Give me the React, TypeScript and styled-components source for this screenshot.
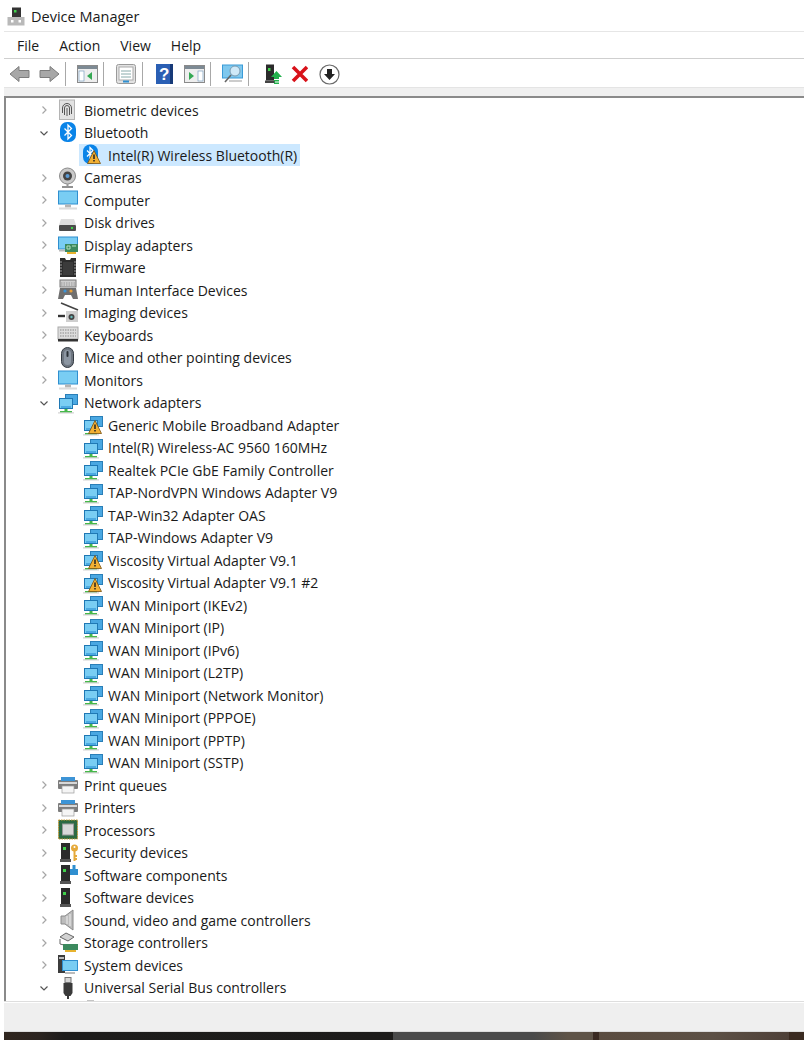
import React from "react";
import styled, { createGlobalStyle } from "styled-components";

const Global = createGlobalStyle`
  * { box-sizing: border-box; }
  html, body { margin: 0; padding: 0; background: #fff; }
  body { font-family: "Open Sans", "Liberation Sans", sans-serif; color: #1a1a1a; }
`;

const Page = styled.div`
  width: 804px;
  height: 1040px;
  overflow: hidden;
  display: flex;
  flex-direction: column;
`;

const TitleBar = styled.div`
  height: 31px;
  flex: none;
  display: flex;
  align-items: center;
  gap: 6px;
  padding: 2px 0 0 7px;
  font-size: 14.5px;
`;

const MenuBar = styled.div`
  height: 28px;
  flex: none;
  margin-left: 4px;
  padding-left: 13px;
  display: flex;
  align-items: center;
  gap: 20px;
  border-top: 1px solid #e6e6e6;
  border-bottom: 1px solid #cfcfcf;
  font-size: 14px;
`;

const Toolbar = styled.div`
  height: 29px;
  flex: none;
  margin-left: 4px;
  padding: 2px 0 0 5px;
  display: flex;
  align-items: center;
  border-bottom: 1px solid #e4e4e4;
`;

const ToolGroup = styled.div<{ $gap?: number }>`
  display: flex;
  align-items: center;
  gap: ${(p) => p.$gap ?? 8}px;
  padding-right: 5px;
  margin-right: 11px;
  height: 24px;
  border-right: 1px solid #a8a8a8;
  &:last-child { border-right: 0; }
`;

const Strip = styled.div`
  height: 8px;
  flex: none;
  margin-left: 4px;
  background: #f0f0f0;
`;

const Tree = styled.div`
  flex: 1;
  min-height: 0;
  margin-left: 4px;
  padding-top: 1px;
  overflow: hidden;
  background: #fff;
  border-top: 2px solid #8a8a8a;
  border-left: 2px solid #8a8a8a;
`;

const Row = styled.div`
  height: 22.5px;
  flex: none;
  display: flex;
  align-items: center;
  font-size: 14px;
  white-space: nowrap;
`;

const Arrow = styled.span`
  width: 20px;
  margin: 0 3px 0 28px;
  flex: none;
  display: flex;
  justify-content: center;
`;

const IconSlot = styled.span<{ $child?: boolean }>`
  width: 22px;
  height: 22px;
  flex: none;
  margin-left: ${(p) => (p.$child ? "76px" : "0")};
  margin-right: ${(p) => (p.$child ? "4px" : "5px")};
  display: flex;
  align-items: center;
  justify-content: center;
`;

const Label = styled.span``;

const Selected = styled.span`
  display: flex;
  align-items: center;
  height: 22px;
  background: #cce8ff;
  padding: 0 3px 0 2px;
  margin-left: 73px;
`;

const StatusBar = styled.div`
  height: 31px;
  flex: none;
  margin-left: 4px;
  background: #efefef;
  border-top: 1px solid #dedede;
  box-shadow: inset 0 1px 0 #fff;
  border-bottom: 1px solid #dcdcdc;
`;

const Wallpaper = styled.div`
  height: 8px;
  flex: none;
  margin-left: 4px;
  display: flex;
`;

const Seg = styled.div<{ $w: number; $c: string }>`
  width: ${(p) => p.$w}px;
  background: ${(p) => p.$c};
`;

const Svg = ({ children }: { children: React.ReactNode }) => (
  <svg width={22} height={22} viewBox="0 0 22 22">{children}</svg>
);

const Chevron = ({ open }: { open?: boolean }) => (
  <svg width="10" height="10" viewBox="0 0 10 10">
    <path d={open ? "M1.5 3.5 5 7l3.5-3.5" : "M3.5 1.5 7 5 3.5 8.5"} fill="none" stroke={open ? "#555" : "#a6a6a6"} strokeWidth="1.2" />
  </svg>
);

const Warn = () => (
  <g>
    <path d="M13 6.5 19.5 19.5H6.5Z" fill="#f2b033" stroke="#7a5210" strokeWidth="0.8" strokeLinejoin="round" />
    <path d="M13 10.5v4.5M13 16v1.6" stroke="#222" strokeWidth="1.5" />
  </g>
);

const Net = ({ warn }: { warn?: boolean }) => (
  <Svg>
    <rect x="8.5" y="2.5" width="12" height="10" fill="#4aa8e2" stroke="#2a7fb8" />
    <rect x="2.5" y="6.5" width="13" height="10" fill="#79cdf3" stroke="#1f78b4" />
    <path d="M4 15h10" stroke="#3a9bd8" strokeWidth="1.4" />
    <rect x="7.5" y="17" width="3" height="2" fill="#46b84a" />
    <rect x="3" y="19" width="12" height="1.6" fill="#46b84a" />
    <rect x="1" y="20.4" width="16" height="1" fill="#c8c8c8" />
    {warn && <Warn />}
  </Svg>
);

const BtDevice = () => (
  <Svg>
    <rect x="2" y="0.5" width="15" height="19.5" rx="7" fill="#0a84e8" />
    <path d="M6 6.5l6 6-3 3V3.5l3 3-6 6" fill="none" stroke="#fff" strokeWidth="1.2" />
    <Warn />
  </Svg>
);

const Monitor = () => (
  <Svg>
    <rect x="1" y="1.5" width="20" height="14" fill="#2f8fd0" />
    <rect x="2" y="2.5" width="18" height="12" fill="#79cdf3" />
    <rect x="8" y="15.5" width="6" height="3" fill="#b5b5b5" />
    <rect x="2" y="18.5" width="18" height="2" fill="#dcdcdc" />
  </Svg>
);

const Server = ({ children }: { children?: React.ReactNode }) => (
  <Svg>
    <rect x="4" y="1" width="9" height="16" fill="#2b2b2b" />
    <rect x="6" y="5" width="3" height="3" fill="#3fd04a" />
    <rect x="3" y="17" width="11" height="3" fill="#555" />
    {children}
  </Svg>
);

const Printer = () => (
  <Svg>
    <rect x="1" y="6" width="20" height="9" rx="1" fill="#7d7d7d" />
    <rect x="4" y="3" width="14" height="4" fill="#3d94d6" />
    <rect x="2" y="8" width="18" height="2" fill="#d8d8d8" />
    <rect x="5" y="12" width="12" height="7" fill="#f5f5f5" stroke="#9a9a9a" strokeWidth="0.7" />
  </Svg>
);

const icons: Record<string, React.ReactNode> = {
  bio: (
    <Svg>
      <rect x="2.5" y="1" width="15" height="19.5" fill="#e2e2e2" stroke="#b4b4b4" />
      <path d="M5.5 14V9a4.5 4.5 0 0 1 9 0v6M7.5 16V9a2.5 2.5 0 0 1 5 0v7M10 9v8" fill="none" stroke="#555" strokeWidth="1" />
    </Svg>
  ),
  bt: (
    <Svg>
      <rect x="3" y="0" width="16" height="20" rx="7" fill="#0a84e8" />
      <path d="M7.5 6.5l7 7-3.5 3.5V3l3.5 3.5-7 7" fill="none" stroke="#fff" strokeWidth="1.3" />
    </Svg>
  ),
  btdev: <BtDevice />,
  cam: (
    <Svg>
      <circle cx="10.5" cy="9" r="8" fill="#c9c9c9" stroke="#8c8c8c" />
      <circle cx="10.5" cy="9" r="4.5" fill="#444" />
      <circle cx="10.5" cy="9" r="2" fill="#5b9bd5" />
      <path d="M10.5 17v2" stroke="#999" strokeWidth="2" />
      <path d="M5 20h11" stroke="#777" strokeWidth="1.6" />
    </Svg>
  ),
  mon: <Monitor />,
  disk: (
    <Svg>
      <path d="M4 7h13l2 6H2Z" fill="#e0e0e0" />
      <rect x="2" y="13" width="17" height="6" rx="1" fill="#4c4c4c" />
      <rect x="14" y="15" width="2" height="2" fill="#3fd04a" />
    </Svg>
  ),
  disp: (
    <Svg>
      <rect x="1" y="2.5" width="20" height="13" fill="#2f8fd0" />
      <rect x="2" y="3.5" width="18" height="11" fill="#79cdf3" />
      <rect x="2" y="15.5" width="12" height="2" fill="#bbb" />
      <rect x="8" y="10" width="13" height="8" fill="#3c8a5e" />
      <rect x="10" y="18" width="9" height="2" fill="#e8b32e" />
      <path d="M10 12h3v3h-3zM15 12h4" fill="none" stroke="#b5e0c0" />
    </Svg>
  ),
  firm: (
    <Svg>
      <path d="M3 1h5l1 2h4l1-2h5v19H3Z" fill="#2c2c2c" />
      <path d="M3 5h16M3 8h16M3 11h16M3 14h16M3 17h16" stroke="#9c9c9c" strokeDasharray="2 12" />
      <rect x="6" y="5" width="10" height="13" fill="#3b3b3b" />
    </Svg>
  ),
  hid: (
    <Svg>
      <rect x="3" y="1" width="16" height="7" fill="#cfcfcf" stroke="#777" />
      <path d="M4 4h14M4 6h14" stroke="#999" strokeDasharray="1.5 1" />
      <path d="M1 20l2-11h16l2 11h-5l-2-4H8l-2 4Z" fill="#6f6f6f" />
      <circle cx="8" cy="12" r="1.6" fill="#3d94d6" />
      <circle cx="14" cy="12" r="1.6" fill="#e8a03a" />
    </Svg>
  ),
  img: (
    <Svg>
      <path d="M4 1l17 7" stroke="#444" strokeWidth="1.6" />
      <path d="M1 14h7" stroke="#333" strokeWidth="2.4" />
      <rect x="9" y="9" width="12" height="11" fill="#cfcfcf" />
      <circle cx="14.5" cy="15" r="3" fill="#444" />
      <circle cx="14.5" cy="15" r="1.2" fill="#6bb" />
    </Svg>
  ),
  kbd: (
    <Svg>
      <rect x="1" y="3" width="20" height="12" fill="#dcdcdc" stroke="#aaa" />
      <path d="M3 6h16M3 9h16M3 12h16" stroke="#8a8a8a" strokeDasharray="1.5 1" />
      <rect x="1" y="15" width="20" height="2.5" fill="#333" />
    </Svg>
  ),
  mouse: (
    <Svg>
      <rect x="4.5" y="0.5" width="12" height="20" rx="6" fill="#6e7680" stroke="#333a42" />
      <rect x="7" y="3" width="7" height="15" rx="3.5" fill="#8c96a2" />
      <rect x="9.5" y="4" width="2" height="6" rx="1" fill="#2c3238" />
    </Svg>
  ),
  net: <Net />,
  netw: <Net warn />,
  print: <Printer />,
  cpu: (
    <Svg>
      <rect x="1.5" y="1" width="19" height="19" fill="#2f6b3f" stroke="#c89a3a" strokeDasharray="1.5 1" />
      <rect x="3" y="2.5" width="16" height="16" fill="#2c6a45" />
      <rect x="5.5" y="5" width="11" height="11" fill="#d9d9d9" stroke="#999" />
    </Svg>
  ),
  sec: (
    <Server>
      <circle cx="17.5" cy="6" r="3.5" fill="#e5a93a" />
      <circle cx="17.5" cy="5" r="1" fill="#fff" />
      <path d="M17.5 9v10M17.5 14h2.5M17.5 17h2.5" stroke="#e5a93a" strokeWidth="2" />
    </Server>
  ),
  swc: (
    <Server>
      <path d="M13 5h8v6h-8Z M15.5 1h3v4h-3Z" fill="#2f8fd0" />
    </Server>
  ),
  swd: <Server />,
  snd: (
    <Svg>
      <path d="M4 7h4l8-6v20l-8-6H4Z" fill="#bcbcbc" stroke="#8a8a8a" />
      <path d="M10 7v8M13 5v12" stroke="#eee" />
    </Svg>
  ),
  stor: (
    <Svg>
      <path d="M3 5l6-4 8 4-6 4Z" fill="#d2d2d2" stroke="#666" />
      <path d="M3 7v5l8 2" fill="none" stroke="#666" />
      <rect x="6" y="12" width="15" height="6" fill="#3c8a5e" />
      <rect x="8" y="18" width="11" height="2" fill="#e8b32e" />
    </Svg>
  ),
  sys: (
    <Svg>
      <rect x="1" y="1" width="7" height="18" fill="#3c3c3c" />
      <rect x="2" y="3" width="5" height="2" fill="#bbb" />
      <rect x="5" y="6" width="16" height="11" fill="#2f8fd0" />
      <rect x="6" y="7" width="14" height="9" fill="#79cdf3" />
      <rect x="8" y="18" width="10" height="2" fill="#bbb" />
    </Svg>
  ),
  usb: (
    <Svg>
      <rect x="8" y="0.5" width="6" height="5" fill="#d6d6d6" stroke="#777" />
      <path d="M6.5 6h9v10l-2 3h-5l-2-3Z" fill="#3a3a3a" />
      <rect x="10" y="19" width="2" height="3" fill="#3a3a3a" />
    </Svg>
  ),
  usbdev: (
    <Svg>
      <rect x="5" y="1" width="7" height="5" fill="#c4c4c4" />
    </Svg>
  ),
};

type Item = { label: string; icon: string; open?: boolean; child?: boolean; selected?: boolean };

const top = (label: string, icon: string, open?: boolean): Item => ({ label, icon, open });
const kid = (label: string, icon = "net"): Item => ({ label, icon, child: true });

const items: Item[] = [
  top("Biometric devices", "bio"),
  top("Bluetooth", "bt", true),
  { label: "Intel(R) Wireless Bluetooth(R)", icon: "btdev", child: true, selected: true },
  top("Cameras", "cam"),
  top("Computer", "mon"),
  top("Disk drives", "disk"),
  top("Display adapters", "disp"),
  top("Firmware", "firm"),
  top("Human Interface Devices", "hid"),
  top("Imaging devices", "img"),
  top("Keyboards", "kbd"),
  top("Mice and other pointing devices", "mouse"),
  top("Monitors", "mon"),
  top("Network adapters", "net", true),
  kid("Generic Mobile Broadband Adapter", "netw"),
  kid("Intel(R) Wireless-AC 9560 160MHz"),
  kid("Realtek PCIe GbE Family Controller"),
  kid("TAP-NordVPN Windows Adapter V9"),
  kid("TAP-Win32 Adapter OAS"),
  kid("TAP-Windows Adapter V9"),
  kid("Viscosity Virtual Adapter V9.1", "netw"),
  kid("Viscosity Virtual Adapter V9.1 #2", "netw"),
  kid("WAN Miniport (IKEv2)"),
  kid("WAN Miniport (IP)"),
  kid("WAN Miniport (IPv6)"),
  kid("WAN Miniport (L2TP)"),
  kid("WAN Miniport (Network Monitor)"),
  kid("WAN Miniport (PPPOE)"),
  kid("WAN Miniport (PPTP)"),
  kid("WAN Miniport (SSTP)"),
  top("Print queues", "print"),
  top("Printers", "print"),
  top("Processors", "cpu"),
  top("Security devices", "sec"),
  top("Software components", "swc"),
  top("Software devices", "swd"),
  top("Sound, video and game controllers", "snd"),
  top("Storage controllers", "stor"),
  top("System devices", "sys"),
  top("Universal Serial Bus controllers", "usb", true),
  kid("", "usbdev"),
];

const TreeRow = ({ item }: { item: Item }) => {
  if (item.selected) {
    return (
      <Row>
        <Selected>
          <IconSlot>{icons[item.icon]}</IconSlot>
          <Label>{item.label}</Label>
        </Selected>
      </Row>
    );
  }
  return (
    <Row>
      {!item.child && (
        <Arrow>
          <Chevron open={item.open} />
        </Arrow>
      )}
      <IconSlot $child={item.child}>{icons[item.icon]}</IconSlot>
      <Label>{item.label}</Label>
    </Row>
  );
};

const WindowIcon = ({ flip }: { flip?: boolean }) => (
  <svg width="21" height="18" viewBox="0 0 21 18">
    <rect x="0.5" y="0.5" width="20" height="17" fill="#eee" stroke="#8a8a8a" />
    <rect x="1" y="1" width="19" height="3" fill="#7d8a94" />
    <rect x={flip ? 14 : 2} y="6" width="5" height="10" fill="#fff" stroke="#7da0c0" strokeWidth="0.7" />
    <path d={flip ? "M5 7v8l5-4Z" : "M15 7v8l-5-4Z"} fill="#35a853" />
  </svg>
);

const BackArrow = ({ flip }: { flip?: boolean }) => (
  <svg width="21" height="18" viewBox="0 0 21 18">
    <path
      d={flip ? "M20 9 11 1.5V5.5H1V12.5H11V16.5Z" : "M1 9 10 1.5V5.5H20V12.5H10V16.5Z"}
      fill="#a8a8a8"
      stroke="#7c7c7c"
    />
  </svg>
);

const App = () => (
  <Page>
    <Global />
    <TitleBar>
      <svg width="18" height="19" viewBox="0 0 18 19">
        <rect x="5" y="0.5" width="9" height="10" fill="#333" />
        <rect x="7" y="3" width="2.5" height="2.5" fill="#3fd04a" />
        <rect x="0.5" y="10" width="17" height="8.5" fill="#b9b9b9" />
        <rect x="4" y="13" width="2.5" height="2.5" fill="#fff" />
        <rect x="11.5" y="13" width="2.5" height="2.5" fill="#fff" />
      </svg>
      Device Manager
    </TitleBar>
    <MenuBar>
      <span>File</span>
      <span>Action</span>
      <span>View</span>
      <span>Help</span>
    </MenuBar>
    <Toolbar>
      <ToolGroup $gap={9}>
        <BackArrow />
        <BackArrow flip />
      </ToolGroup>
      <ToolGroup>
        <WindowIcon />
      </ToolGroup>
      <ToolGroup>
        <svg width="22" height="20" viewBox="-1 0 22 20">
          <rect x="0.5" y="0.5" width="19" height="19" rx="2" fill="#e2e2e2" stroke="#9a9a9a" />
          <rect x="3" y="3" width="14" height="13" fill="#fff" stroke="#aaa" />
          <path d="M5 7h10M5 10h10M5 13h10" stroke="#8aa" />
          <rect x="7" y="16.5" width="6" height="2" fill="#2f8fd0" />
        </svg>
      </ToolGroup>
      <ToolGroup $gap={11}>
        <svg width="19" height="20" viewBox="-2 0 19 20">
          <rect width="17" height="20" fill="#2a5fb4" />
          <rect x="14" width="3" height="20" fill="#173a78" />
          <text x="3" y="16" fontSize="17" fontWeight="700" fontFamily="Liberation Sans" fill="#fff">?</text>
        </svg>
        <WindowIcon flip />
      </ToolGroup>
      <ToolGroup>
        <svg width="21" height="20" viewBox="0 0 21 20">
          <rect x="0.5" y="1" width="20" height="13" fill="#7fc8ee" stroke="#3a9bd8" />
          <circle cx="13" cy="7" r="5" fill="#cfe9f8" stroke="#7a9ab0" />
          <path d="M9 11 3 18" stroke="#666" strokeWidth="1.6" />
          <path d="M7 17h13" stroke="#bbb" strokeWidth="1.5" />
        </svg>
      </ToolGroup>
      <ToolGroup>
        <svg width="22" height="20" viewBox="-5 0 22 20">
          <rect x="1" y="0.5" width="8" height="16" fill="#2b2b2b" />
          <rect x="3" y="4" width="2.5" height="3" fill="#3fd04a" />
          <rect x="0" y="16.5" width="10" height="2.5" fill="#444" />
          <path d="M11.5 7 17 13H14V15H9V13H6Z" fill="#22b14c" />
          <rect x="9" y="16" width="5" height="1.5" fill="#22b14c" />
          <rect x="9" y="18.5" width="5" height="1.5" fill="#22b14c" />
        </svg>
        <svg width="18" height="18" viewBox="-1 0 18 18">
          <path d="M2 2 16 16M16 2 2 16" stroke="#d8121a" strokeWidth="3.6" />
        </svg>
        <svg width="24" height="21" viewBox="-3 0 24 21">
          <circle cx="10.5" cy="10.5" r="9.5" fill="#fff" stroke="#6a6a6a" strokeWidth="1.2" />
          <path d="M8 5h5v5h3l-5.5 6L5 10h3Z" fill="#222" />
        </svg>
      </ToolGroup>
    </Toolbar>
    <Strip />
    <Tree>
      {items.map((item) => (
        <TreeRow key={item.label || "clipped"} item={item} />
      ))}
    </Tree>
    <StatusBar />
    <Wallpaper>
      <Seg $w={389} $c="linear-gradient(90deg, #30261f 0, #2b2420 36px, #1d1c1b 60px, #1c1b1a 100%)" />
      <Seg $w={200} $c="linear-gradient(90deg, #4a4a4a 0, #4a4a4a 140px, #5e5347 175px, #5e5347 100%)" />
      <Seg $w={6} $c="#3a2a22" />
      <Seg $w={190} $c="linear-gradient(90deg, #5a4c40, #5c5045 60%, #4e4038)" />
      <Seg $w={15} $c="#3a2a20" />
    </Wallpaper>
  </Page>
);

export default App;
